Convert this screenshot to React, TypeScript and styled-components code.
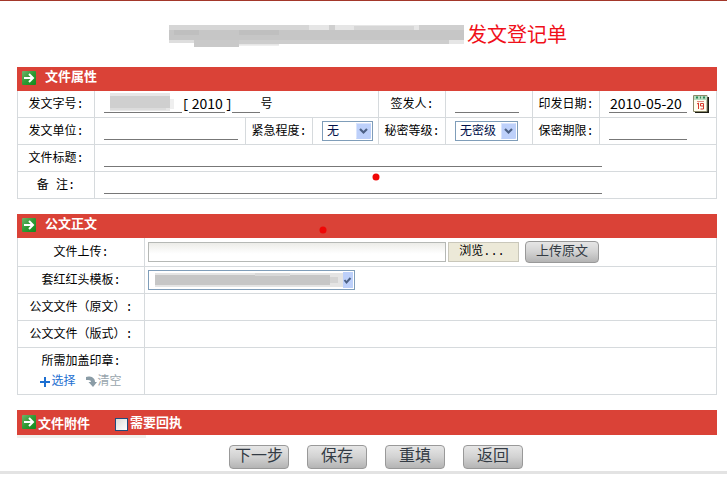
import React from "react";
import styled, { createGlobalStyle, css } from "styled-components";

const GlobalStyle = createGlobalStyle`
  *, *::before, *::after { box-sizing: border-box; }
  body {
    margin: 0;
    background: #fff;
    color: #000;
    font-family: "Liberation Mono", "Noto Sans CJK SC", sans-serif;
    font-size: 12px;
    line-height: 16px;
  }
  input, select, button { font: inherit; color: inherit; margin: 0; }
`;

const line = "#d6dadd";
const red = "#da4237";

const Page = styled.div`
  border-top: 1px solid #a3372a;
  border-bottom: 3px solid #e3e3e3;
`;

const Form = styled.form`
  position: relative;
  display: flex;
  flex-direction: column;
  padding: 0 10px 2px 17px;
`;

const Title = styled.h1`
  display: flex;
  align-items: center;
  justify-content: center;
  gap: 2px;
  height: 66px;
  margin: 0;
  padding: 2px 0 0 2px;
  font-size: 20px;
  line-height: 24px;
  font-weight: 400;
  color: #f0101a;
`;

const TitleText = styled.span`
  padding-top: 4px;
`;

const Section = styled.section`
  margin-bottom: 15px;
`;

const SectionHead = styled.div<{ $tight?: boolean }>`
  display: flex;
  align-items: center;
  gap: ${(p) => (p.$tight ? 2 : 9)}px;
  height: ${(p) => (p.$tight ? 25 : 24)}px;
  padding: 0 5px 2px;
  background: ${red};
  color: #fff;
  font-size: 13px;
  font-weight: 700;
`;

const SectionName = styled.h2`
  margin: 0;
  font: inherit;
  line-height: 16px;
`;

const AttachName = styled(SectionName)`
  margin-top: 6px;
`;

const Grid = styled.div<{ $columns: string; $rows: string }>`
  display: grid;
  grid-template-columns: ${(p) => p.$columns};
  grid-template-rows: ${(p) => p.$rows};
  border-right: 1px solid ${line};
`;

const cell = css`
  display: flex;
  align-items: center;
  min-width: 0;
  border-left: 1px solid ${line};
  border-bottom: 1px solid ${line};
`;

const LabelCell = styled.div`
  ${cell}
  flex-direction: column;
  justify-content: center;
  gap: 4px;
  padding-top: 1px;
  white-space: nowrap;
`;

const FieldCell = styled.div<{ $span?: number; $near?: boolean }>`
  ${cell}
  grid-column: span ${(p) => p.$span ?? 1};
  padding-left: ${(p) => (p.$near ? 3 : 9)}px;
`;

const LineInput = styled.input<{ $width: number }>`
  width: ${(p) => p.$width}px;
  min-width: 0;
  height: 18px;
  padding: 0 1px 2px;
  border: 0;
  border-bottom: 1px solid #777;
  border-radius: 0;
  background: transparent;
  font-family: "Noto Sans CJK SC", sans-serif;
  font-size: 14px;
  line-height: 15px;
  text-align: ${(p) => (p.$width < 40 ? "center" : "left")};
  outline: none;
`;

const NumberPart = styled.span`
  flex: none;
  padding-top: 2px;
  line-height: 18px;
`;

const Masked = styled.div`
  position: relative;
  display: flex;
`;

const MaskOver = styled.svg`
  position: absolute;
  left: 6px;
  top: -2px;
`;

const SelectBox = styled.div<{ $width: number }>`
  position: relative;
  display: flex;
  width: ${(p) => p.$width}px;
  height: 20px;
  border: 1px solid #7f9db9;
`;

const Select = styled.select`
  appearance: none;
  width: 100%;
  padding: 1px 18px 0 4px;
  border: 0;
  border-radius: 0;
  background: #fff;
  color: #00104a;
  outline: none;
`;

const SelectArrow = styled.svg`
  position: absolute;
  right: 1px;
  top: 1px;
  pointer-events: none;
`;

const SelectMask = styled.svg`
  position: absolute;
  left: 6px;
  top: 1px;
  pointer-events: none;
`;

const IconButton = styled.button`
  display: flex;
  margin-left: 6px;
  padding: 0;
  border: 0;
  background: none;
`;

const FilePath = styled.input`
  width: 298px;
  height: 20px;
  border: 1px solid #b5b8b5;
  background: linear-gradient(#ecece8, #fff 60%);
  outline: none;
`;

const BrowseButton = styled.button`
  width: 71px;
  height: 20px;
  margin: 0 6px 0 2px;
  padding: 0 3px 0 0;
  border: 1px solid #c9c7ba;
  background: #ece9d8;
`;

const GreyButton = styled.button<{ $small?: boolean }>`
  width: ${(p) => (p.$small ? 74 : 60)}px;
  height: ${(p) => (p.$small ? 22 : 24)}px;
  padding: 0;
  border: 1px solid #999;
  border-radius: 4px;
  background: linear-gradient(#e6e6e6, #d2d2d2 50%, #b4b4b4);
  color: #333b44;
  font-size: ${(p) => (p.$small ? 13 : 16)}px;
  line-height: 18px;
`;

const Actions = styled.div`
  display: flex;
  justify-content: center;
  gap: 18px;
  padding: 7px 0 0 18px;
`;

const Links = styled.div`
  display: flex;
  gap: 10px;
`;

const ActionLink = styled.a<{ $muted?: boolean }>`
  display: flex;
  align-items: center;
  gap: 1px;
  color: ${(p) => (p.$muted ? "#98a5ad" : "#1d6fd1")};
  text-decoration: none;
`;

const Receipt = styled.label`
  display: flex;
  align-items: center;
  gap: 2px;
  margin: 5px 0 0 23px;
`;

const CheckBox = styled.input`
  appearance: none;
  width: 13px;
  height: 13px;
  border: 1px solid #1f4a7c;
  background: linear-gradient(135deg, #dcdcd7, #fff);
  &:checked { background: #21a121; }
`;

const Stub = styled.div`
  width: 129px;
  height: 3px;
  background: #f1f0ec;
`;

const Dot = styled.svg<{ $x: number; $y: number }>`
  position: absolute;
  left: ${(p) => p.$x}px;
  top: ${(p) => p.$y}px;
  pointer-events: none;
`;

const GreenArrow = () => (
  <svg width="14" height="14" viewBox="0 0 14 14" aria-hidden="true">
    <defs>
      <linearGradient id="green" x1="0" y1="0" x2="1" y2="1">
        <stop offset="0" stopColor="#6fb56c" />
        <stop offset="0.5" stopColor="#2f9a34" />
        <stop offset="1" stopColor="#128a1c" />
      </linearGradient>
    </defs>
    <rect width="14" height="14" rx="1" fill="url(#green)" />
    <path d="M2 7h9M7 3l4 4-4 4" fill="none" stroke="#fff" strokeWidth="2" />
  </svg>
);

const Calendar = () => (
  <svg width="16" height="18" viewBox="0 0 16 18" aria-hidden="true">
    <path d="M2 2h14v16H2z" fill="#1c1c14" />
    <path d="M0.500 0.500h13.500v16H0.500z" fill="#fffef0" stroke="#8c8a6a" />
    <path d="M1 1h13v4H1z" fill="#b9dcc0" />
    <path d="M3 2.500h2M7 2.500h1M10 2.500h2" stroke="#2c8a58" strokeWidth="2" />
    <path d="M4 6.500h7" stroke="#e08a80" />
    <path d="M4 9l1.500-1v6" fill="none" stroke="#d8382c" />
    <path d="M10.500 11h-3V8.500h3v5.500h-3" fill="none" stroke="#d8382c" />
  </svg>
);

const Chevron = () => (
  <SelectArrow width="15" height="16" viewBox="0 0 15 16" aria-hidden="true">
    <rect width="15" height="16" rx="1" fill="#bdd0fa" />
    <path d="M0.500 15V0.500H14" fill="none" stroke="#d9e4fd" />
    <path d="M4 6l3.500 3.500L11 6" fill="none" stroke="#4d6185" strokeWidth="2.200" />
  </SelectArrow>
);

const SmallTick = () => (
  <SelectArrow width="10" height="16" viewBox="0 0 10 16" aria-hidden="true">
    <rect width="10" height="16" fill="#bdd0fa" />
    <path d="M1.500 8l2 2.500L7.500 6" fill="none" stroke="#4d6185" strokeWidth="2" />
  </SelectArrow>
);

const TitleMask = () => (
  <svg width="296" height="24" viewBox="0 0 296 24" aria-hidden="true">
    <path d="M0 2h295v20H0z" fill="#e6e6e6" />
    <path d="M0 2h140v5H0zM185 3h60v4h-60z" fill="#d6d6d6" />
    <path d="M160 2h6v5h-6zM250 2h45v5h-45z" fill="#cfcfcf" />
    <path d="M0 7h295v10H0z" fill="#c6c6c6" />
    <path d="M5 7h25v5H5zM70 7h40v5H70z" fill="#bfbfbf" />
    <path d="M0 17h25v3H0z" fill="#dedede" />
    <path d="M25 17h45v7H25z" fill="#c9c9c9" />
    <path d="M70 17h210v4H70z" fill="#cdcdcd" />
    <path d="M70 22h40v1H70z" fill="#eee" />
    <path d="M0 20h25v4H0zM110 21h185v3H110z" fill="#fff" />
  </svg>
);

const RedDot = ({ x, y }: { x: number; y: number }) => (
  <Dot $x={x} $y={y} width="8" height="8" viewBox="0 0 8 8" aria-hidden="true">
    <circle cx="4" cy="4" r="3.500" fill="#f00606" />
  </Dot>
);

interface FieldProps {
  id: string;
  label: string;
  span?: number;
  children: React.ReactNode;
}

const Field = ({ id, label, span, children }: FieldProps) => (
  <>
    <LabelCell>
      <label htmlFor={id}>{label}</label>
    </LabelCell>
    <FieldCell $span={span}>{children}</FieldCell>
  </>
);

export default function App() {
  return (
    <>
      <GlobalStyle />
      <Page>
        <Form onSubmit={(e) => e.preventDefault()}>
          <Title>
            <TitleMask />
            <TitleText>发文登记单</TitleText>
          </Title>

          <Section>
            <SectionHead>
              <GreenArrow />
              <SectionName>文件属性</SectionName>
            </SectionHead>
            <Grid
              $columns="77px 151fr 67px 66fr 67px 87fr 67px 117fr"
              $rows="repeat(4, 27px)"
            >
              <Field id="docNo" label="发文字号:" span={3}>
                <Masked>
                  <LineInput id="docNo" $width={78} />
                  <MaskOver width="66" height="18" viewBox="0 0 66 18" aria-hidden="true">
                    <path d="M0 0h60v18H0z" fill="#e6e6e6" />
                    <path d="M0 3h60v12H0z" fill="#cfcfcf" />
                    <path d="M0 15h56v2H0z" fill="#dcdcdc" />
                    <path d="M60 6h4v10h-4z" fill="#efefef" />
                  </MaskOver>
                </Masked>
                <NumberPart>[</NumberPart>
                <LineInput aria-label="年份" $width={36} defaultValue="2010" />
                <NumberPart>]</NumberPart>
                <LineInput aria-label="序号" $width={28} />
                <NumberPart>号</NumberPart>
              </Field>
              <Field id="signer" label="签发人:">
                <LineInput id="signer" $width={64} />
              </Field>
              <Field id="date" label="印发日期:">
                <LineInput id="date" $width={78} defaultValue="2010-05-20" />
                <IconButton type="button" aria-label="选择日期">
                  <Calendar />
                </IconButton>
              </Field>

              <Field id="unit" label="发文单位:">
                <LineInput id="unit" $width={134} />
              </Field>
              <Field id="urgency" label="紧急程度:">
                <SelectBox $width={51}>
                  <Select id="urgency">
                    <option>无</option>
                  </Select>
                  <Chevron />
                </SelectBox>
              </Field>
              <Field id="secrecy" label="秘密等级:">
                <SelectBox $width={63}>
                  <Select id="secrecy">
                    <option>无密级</option>
                  </Select>
                  <Chevron />
                </SelectBox>
              </Field>
              <Field id="term" label="保密期限:">
                <LineInput id="term" $width={78} />
              </Field>

              <Field id="subject" label="文件标题:" span={7}>
                <LineInput id="subject" $width={498} />
              </Field>
              <Field id="remark" label="备 注:" span={7}>
                <LineInput id="remark" $width={498} />
              </Field>
            </Grid>
          </Section>

          <Section>
            <SectionHead>
              <GreenArrow />
              <SectionName>公文正文</SectionName>
            </SectionHead>
            <Grid $columns="127px 1fr" $rows="29px 27px 27px 27px 47px">
              <LabelCell>
                <label htmlFor="file">文件上传:</label>
              </LabelCell>
              <FieldCell $near>
                <FilePath id="file" type="text" readOnly />
                <BrowseButton type="button">浏览...</BrowseButton>
                <GreyButton type="button" $small>
                  上传原文
                </GreyButton>
              </FieldCell>
              <LabelCell>
                <label htmlFor="template">套红红头模板:</label>
              </LabelCell>
              <FieldCell $near>
                <SelectBox $width={207}>
                  <Select id="template" />
                  <SelectMask width="190" height="16" viewBox="0 0 190 16" aria-hidden="true">
                    <path d="M0 1h188v14H0z" fill="#e4e4e4" />
                    <path d="M0 3h175v10H0z" fill="#c6c6c6" />
                    <path d="M100 1h35v3h-35z" fill="#d8d8d8" />
                    <path d="M175 5h8v6h-8z" fill="#d4d4d4" />
                  </SelectMask>
                  <SmallTick />
                </SelectBox>
              </FieldCell>
              <LabelCell>公文文件（原文）:</LabelCell>
              <FieldCell $near />
              <LabelCell>公文文件（版式）:</LabelCell>
              <FieldCell $near />
              <LabelCell>
                <span>所需加盖印章:</span>
                <Links>
                  <ActionLink href="#select">
                    <svg width="10" height="10" viewBox="0 0 10 10" aria-hidden="true">
                      <path d="M5 0v10M0 5h10" stroke="#1d6fd1" strokeWidth="2" />
                    </svg>
                    选择
                  </ActionLink>
                  <ActionLink href="#clear" $muted>
                    <svg width="11" height="11" viewBox="0 0 11 11" aria-hidden="true">
                      <path d="M0 1C2 0 9 0 9 6H11L7 11 2.500 6H5C5 4 3 4 0 4z" fill="#8a9ca6" />
                    </svg>
                    清空
                  </ActionLink>
                </Links>
              </LabelCell>
              <FieldCell $near />
            </Grid>
          </Section>

          <section>
            <SectionHead $tight>
              <GreenArrow />
              <AttachName>文件附件</AttachName>
              <Receipt>
                <CheckBox type="checkbox" />
                需要回执
              </Receipt>
            </SectionHead>
            <Stub />
          </section>

          <Actions>
            <GreyButton type="button">下一步</GreyButton>
            <GreyButton type="button">保存</GreyButton>
            <GreyButton type="reset">重填</GreyButton>
            <GreyButton type="button">返回</GreyButton>
          </Actions>

          <RedDot x={372} y={172} />
          <RedDot x={319} y={225} />
        </Form>
      </Page>
    </>
  );
}
